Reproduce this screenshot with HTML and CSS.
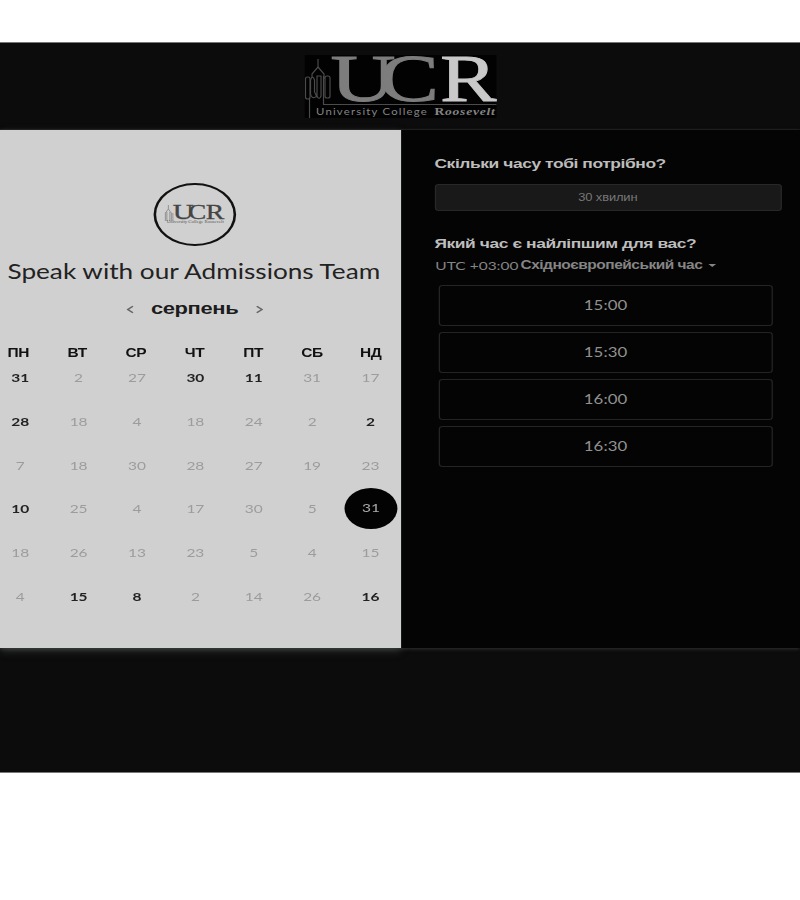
FILE: index.html
```
<!DOCTYPE html>
<html lang="uk">
<head>
<meta charset="utf-8">
<title>Speak with our Admissions Team</title>
<link rel="stylesheet" href="styles.css">
</head>
<body>
<div class="page">
  <header class="banner">
    <svg class="logo" viewBox="305 55 192 63" preserveAspectRatio="none">
      <rect x="305" y="55" width="192" height="63" fill="#020202"/>
      <g fill="none" stroke="#4b4b4b" stroke-width="1.200">
        <path d="M318.500 59v8l-6 7v4M318.500 67l6 7v5M310 118V99"/>
        <rect x="306" y="77" width="4.500" height="22" rx="2"/>
        <path d="M311 80q2-6 4 0v12q3 5 1 5-4 2-5-3zM317.500 76h4v20q-2 5-4 0z"/>
        <rect x="325.500" y="76" width="5" height="22" rx="2"/>
        <path d="M324 76v28.500h173"/>
      </g>
      <g class="serif" font-size="67">
        <text x="331" y="101" textLength="65" lengthAdjust="spacingAndGlyphs" fill="#7d7d7d" stroke="#7d7d7d" stroke-width="1">U</text>
        <text x="379.500" y="101" textLength="60" lengthAdjust="spacingAndGlyphs" fill="#7d7d7d" stroke="#7d7d7d" stroke-width="1">C</text>
        <text x="440.500" y="101.500" textLength="57" lengthAdjust="spacingAndGlyphs" fill="#c9c9c9" stroke="#c9c9c9" stroke-width=".8">R</text>
      </g>
      <text class="sans" x="316.500" y="115" font-size="9.500" letter-spacing="1" textLength="112" lengthAdjust="spacingAndGlyphs" fill="#858585">University College</text>
      <text class="serif" x="435" y="115" font-size="11" font-weight="bold" textLength="61" lengthAdjust="spacingAndGlyphs" letter-spacing=".6" fill="#858585">R<tspan font-style="italic">oosevelt</tspan></text>
    </svg>
  </header>
  <main class="booking">
    <section class="calendar">
      <div class="avatar">
        <svg class="avatar-logo" viewBox="164 200 62 26" preserveAspectRatio="none">
          <path d="M168.500 205v4l-3 4v8M168.500 209l3 4v8M167 212v9M170 212v9M173 213v8" fill="none" stroke="#8a8a8a" stroke-width=".9"/>
          <g class="serif" font-size="22" fill="#444" stroke="#444" stroke-width=".3">
            <text x="173" y="219.500" textLength="21" lengthAdjust="spacingAndGlyphs">U</text>
            <text x="188.500" y="219.500" textLength="18" lengthAdjust="spacingAndGlyphs">C</text>
            <text x="206" y="219.500" textLength="18.500" lengthAdjust="spacingAndGlyphs">R</text>
          </g>
          <text class="serif" x="167" y="223.500" font-size="4" textLength="57" lengthAdjust="spacingAndGlyphs" fill="#555">University College Roosevelt</text>
        </svg>
      </div>
      <h1 class="title">Speak with our Admissions Team</h1>
      <div class="month">
        <svg class="chevron" viewBox="0 0 6 8"><path d="M5 .7L1 4l4 3.300"/></svg>
        <span class="month-name">серпень</span>
        <svg class="chevron" viewBox="0 0 6 8"><path d="M1 .7L5 4 1 7.300"/></svg>
      </div>
      <div class="week names"><span>ПН</span><span>ВТ</span><span>СР</span><span>ЧТ</span><span>ПТ</span><span>СБ</span><span>НД</span></div>
      <div class="week"><b>31</b><span>2</span><span>27</span><b>30</b><b>11</b><span>31</span><span>17</span></div>
      <div class="week"><b>28</b><span>18</span><span>4</span><span>18</span><span>24</span><span>2</span><b>2</b></div>
      <div class="week"><span>7</span><span>18</span><span>30</span><span>28</span><span>27</span><span>19</span><span>23</span></div>
      <div class="week"><b>10</b><span>25</span><span>4</span><span>17</span><span>30</span><span>5</span><span class="selected">31</span></div>
      <div class="week"><span>18</span><span>26</span><span>13</span><span>23</span><span>5</span><span>4</span><span>15</span></div>
      <div class="week"><span>4</span><b>15</b><b>8</b><span>2</span><span>14</span><span>26</span><b>16</b></div>
    </section>
    <section class="options">
      <h2 class="question">Скільки часу тобі потрібно?</h2>
      <div class="duration">30 хвилин</div>
      <h2 class="question second">Який час є найліпшим для вас?</h2>
      <div class="zone"><span class="utc">UTC +03:00</span><span class="zone-name">Східноєвропейський час</span><i class="caret"></i></div>
      <div class="slots">
        <div class="slot">15:00</div>
        <div class="slot">15:30</div>
        <div class="slot">16:00</div>
        <div class="slot">16:30</div>
      </div>
    </section>
  </main>
</div>
</body>
</html>
```
FILE: styles.css
```
* { box-sizing: border-box; }
html { background: #fff; overflow: hidden; }
body { margin: 0; height: 900px; padding-top: 42px; overflow: hidden; }

.page {
  width: 620px;
  height: 731px;
  transform: scaleX(1.290323);
  transform-origin: 0 0;
  background: #0c0c0c;
  border-top: 1px solid #777;
  border-bottom: 1px solid #777;
  font-family: Lato, "Liberation Sans", sans-serif;
}
.serif { font-family: "Liberation Serif", serif; }
.sans { font-family: Lato, sans-serif; }

.banner { height: 87px; padding: 12px 0 0 236.4px; border-bottom: 1px solid #191919; }
.logo { display: block; width: 148.8px; height: 63px; }

.booking { display: flex; height: 518px; box-shadow: 0 1px 3px #333; }
.calendar { width: 311.2px; background: #d0d0d0; padding-top: 53px; box-shadow: 0 3px 7px -1px #3c3f3e; }
.options { flex: 1; position: relative; background: #040404; padding: 24px 14.5px 0 25.5px; color: #bdbdbd; }

.avatar {
  width: 63.5px; height: 63px; margin-left: 119px;
  border: 2px solid #111; border-radius: 50%;
  padding: 15px 0 0 6px;
}
.avatar-logo { display: block; width: 48px; height: 26px; }
.title { margin: 10px 0 0 5.8px; font-size: 20.3px; line-height: 30px; font-weight: 400; color: #222; white-space: nowrap; }
.month { display: flex; align-items: center; height: 24px; margin: 11px 0 0 98px; color: #1c1c1c; }
.month-name { width: 68px; margin: 0 12.5px 0 13px; font: bold 17px/24px "Liberation Sans", sans-serif; letter-spacing: -.3px; }
.chevron { width: 6px; height: 9px; fill: none; stroke: #666; stroke-width: 1.4; }

.week { display: grid; grid-template-columns: repeat(7, 45.25px); margin-left: -7px; height: 43.8px; font-size: 12px; line-height: 20px; letter-spacing: -.1px; text-align: center; color: #9c9c9c; }
.week b { color: #222; font-weight: 700; }
.week > * { display: block; height: 20px; }
.names { grid-template-columns: repeat(7, 45.5px); height: 25px; margin: 22px 0 0 -8.5px; font: bold 12px/20px "Liberation Sans", sans-serif; letter-spacing: -.3px; color: #111; }
.week .selected { width: 41px; height: 41px; margin: -11px 0 0 2.5px; line-height: 40px; border-radius: 50%; background: #030303; color: #aaa; }

.question { margin: 0; font: bold 13.5px/20px "Liberation Sans", sans-serif; letter-spacing: -.33px; white-space: nowrap; }
.duration { height: 27px; margin-top: 10px; border: 1px solid #282828; border-radius: 3px; background: #191919; color: #777; font: 10px/25px "Liberation Sans", sans-serif; letter-spacing: -.1px; text-align: center; }
.second { margin-top: 23px; }
.zone { display: flex; align-items: center; height: 20px; margin-top: 1px; color: #858585; white-space: nowrap; }
.utc { width: 66px; margin-left: .7px; font-size: 12px; }
.zone-name { font: bold 12px/20px "Liberation Sans", sans-serif; letter-spacing: -.38px; }
.caret { margin-left: 5px; border: 3px solid transparent; border-top-color: #858585; border-bottom: 0; }
.slots { display: grid; gap: 6px; margin: 10px 6.5px 0 3px; }
.slot { height: 41px; border: 1px solid #242424; border-radius: 3px; font-size: 13px; line-height: 39px; letter-spacing: .1px; text-align: center; color: #919191; }
```
